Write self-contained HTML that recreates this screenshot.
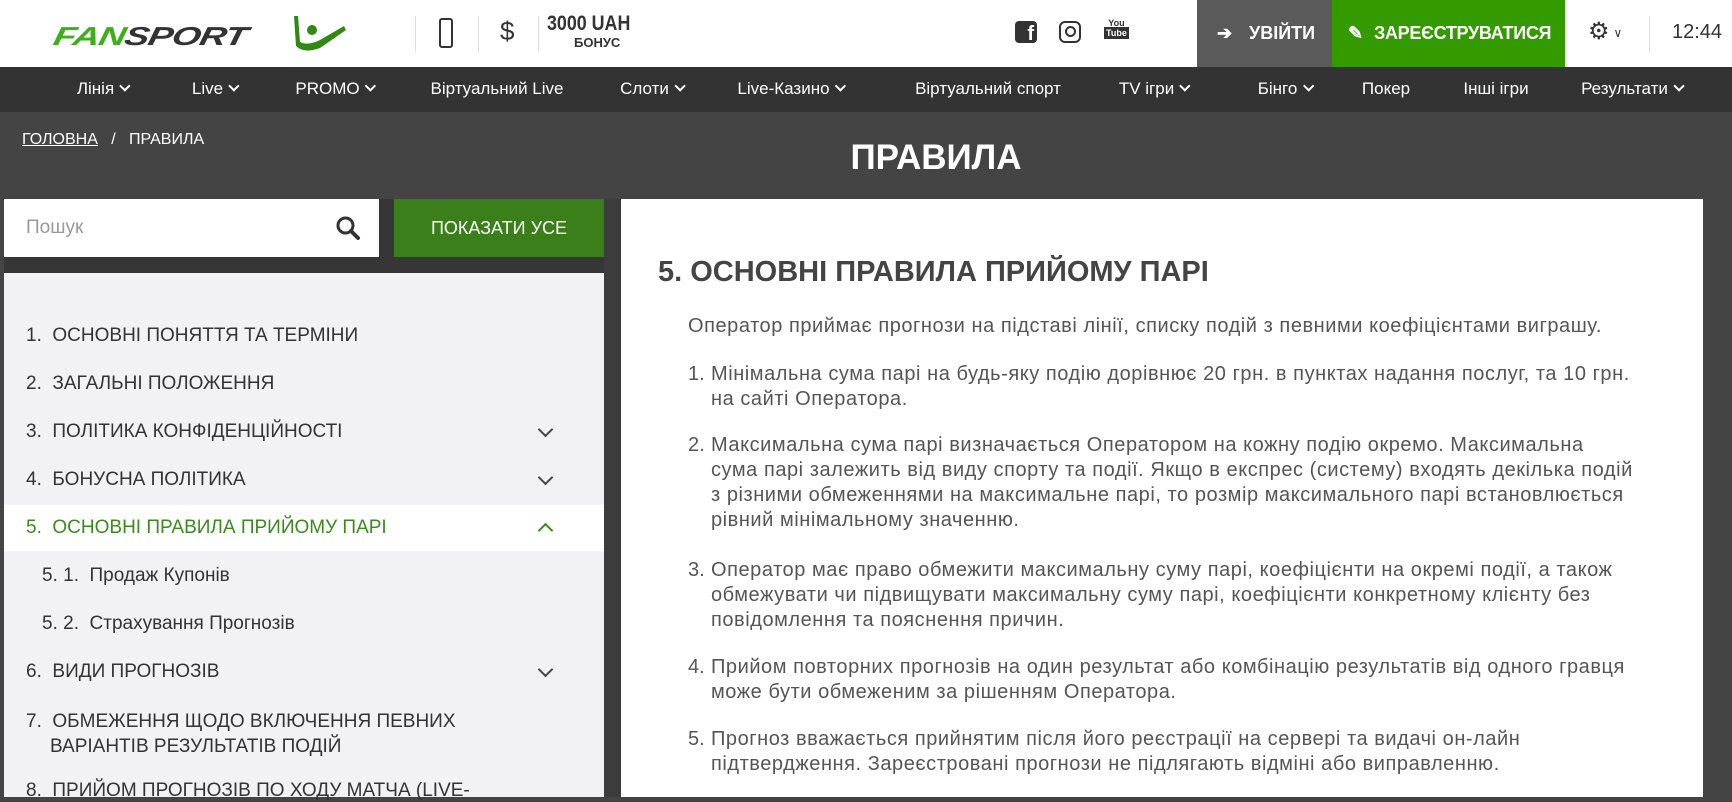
<!DOCTYPE html>
<html><head><meta charset="utf-8">
<style>
*{margin:0;padding:0;box-sizing:border-box}
body{width:1732px;height:797px;overflow:hidden;background:#444;font-family:"Liberation Sans",sans-serif;position:relative}
.abs{position:absolute}
.hdr{left:0;top:0;width:1732px;height:67px;background:#fff}
.nav{left:0;top:67px;width:1732px;height:45px;background:#333}
.nav span{position:absolute;top:12px;color:#fff;font-size:17px;transform:translateX(-50%);white-space:nowrap}
.chev{display:inline-block;width:8px;height:8px;border-right:2px solid currentColor;border-bottom:2px solid currentColor;transform:rotate(45deg);margin-left:7px;position:relative;top:-4px}
.sep{width:1px;height:36px;background:#ddd;top:16px}
.side{left:4px;top:273px;width:600px;height:524px;background:#f2f2f5}
.item{position:absolute;left:26px;font-size:19px;color:#333;white-space:nowrap}
.ic{position:absolute;left:540px;width:11px;height:11px;border-right:2px solid #444;border-bottom:2px solid #444;transform:rotate(45deg)}
.content{left:621px;top:199px;width:1082px;height:598px;background:#fff}
.p{position:absolute;font-size:20px;letter-spacing:0.55px;color:#555;line-height:25px;white-space:nowrap}
.n{position:absolute;left:688px;font-size:20px;line-height:25px;color:#555}
</style></head><body>
<div class="abs hdr"></div>
<!-- logo -->
<div class="abs" style="left:57px;top:22px;font-size:37px;font-weight:bold;font-style:italic;letter-spacing:-1px;transform:skewX(-12deg) scaleY(0.7);transform-origin:left top;white-space:nowrap"><span style="color:#3fae1c">FAN</span><span style="color:#333">SPORT</span></div>
<svg class="abs" style="left:290px;top:12px" width="60" height="42" viewBox="0 0 60 42"><path d="M4 4 L8 4 L10 30 Q18 34 30 28 L54 14 L56 18 L30 36 Q14 42 6 34 Z" fill="#2f8a12"/><circle cx="22" cy="18" r="5" fill="#2f8a12"/></svg>
<div class="abs sep" style="left:415px"></div>
<div class="abs sep" style="left:478px"></div>
<div class="abs sep" style="left:538px"></div>
<div class="abs" style="left:439px;top:18px;width:14px;height:30px;border:2.5px solid #333;border-radius:3px"></div>
<div class="abs" style="left:500px;top:16px;font-size:26px;color:#333">$</div>
<div class="abs" style="left:547px;top:12px;font-size:21px;font-weight:bold;color:#333;transform:scaleX(0.85);transform-origin:left">3000 UAH</div>
<div class="abs" style="left:574px;top:35px;font-size:13px;font-weight:bold;color:#333">БОНУС</div>
<!-- social -->
<div class="abs" style="left:1015px;top:21px;width:22px;height:22px;background:#333;border-radius:4px;color:#fff;font-weight:bold;font-size:20px;text-align:right;padding-right:3px;line-height:26px">f</div>
<div class="abs" style="left:1059px;top:21px;width:22px;height:22px;border:2.5px solid #333;border-radius:6px"><div style="margin:3px auto;width:11px;height:11px;border:2.5px solid #333;border-radius:50%"></div></div>
<div class="abs" style="left:1104px;top:18px;font-size:9px;font-weight:bold;color:#333;text-align:center;line-height:10px">You<br><span style="background:#333;color:#fff;padding:1px 2px">Tube</span></div>
<!-- buttons -->
<div class="abs" style="left:1197px;top:0;width:135px;height:67px;background:#5a5a5a;color:#fff;font-weight:bold;font-size:18px;line-height:67px;padding-left:52px"><span style="position:absolute;left:20px;font-size:18px">➔</span>УВІЙТИ</div>
<div class="abs" style="left:1332px;top:0;width:233px;height:67px;background:#339a00;color:#fff;font-weight:bold;font-size:18px;line-height:67px;padding-left:42px;letter-spacing:-0.3px"><span style="position:absolute;left:16px">✎</span>ЗАРЕЄСТРУВАТИСЯ</div>
<div class="abs" style="left:1588px;top:17px;font-size:24px;color:#333">⚙<span style="font-size:12px;margin-left:4px;vertical-align:middle">∨</span></div>
<div class="abs sep" style="left:1649px"></div>
<div class="abs" style="left:1672px;top:21px;font-size:20px;color:#333">12:44</div>
<!-- nav -->
<div class="abs nav">
<span style="left:103px">Лінія<i class="chev"></i></span>
<span style="left:215px">Live<i class="chev"></i></span>
<span style="left:335px">PROMO<i class="chev"></i></span>
<span style="left:497px">Віртуальний Live</span>
<span style="left:652px">Слоти<i class="chev"></i></span>
<span style="left:791px">Live-Казино<i class="chev"></i></span>
<span style="left:988px">Віртуальний спорт</span>
<span style="left:1154px">TV ігри<i class="chev"></i></span>
<span style="left:1285px">Бінго<i class="chev"></i></span>
<span style="left:1386px">Покер</span>
<span style="left:1496px">Інші ігри</span>
<span style="left:1632px">Результати<i class="chev"></i></span>
</div>
<!-- breadcrumb/title -->
<div class="abs" style="left:22px;top:131px;font-size:16px;color:#fff"><u>ГОЛОВНА</u>&nbsp;&nbsp; / &nbsp;&nbsp;ПРАВИЛА</div>
<div class="abs" style="left:0;width:1872px;top:138px;text-align:center;font-size:35px;font-weight:bold;color:#fff">ПРАВИЛА</div>
<!-- search -->
<div class="abs" style="left:4px;top:199px;width:600px;height:74px;background:#363636"></div>
<div class="abs" style="left:4px;top:199px;width:375px;height:58px;background:#fff"></div>
<div class="abs" style="left:26px;top:217px;font-size:19px;color:#999">Пошук</div>
<svg class="abs" style="left:335px;top:215px" width="26" height="26" viewBox="0 0 26 26"><circle cx="10.5" cy="10.5" r="7.5" fill="none" stroke="#333" stroke-width="3"/><path d="M16 16 L23 23" stroke="#333" stroke-width="4" stroke-linecap="round"/></svg>
<div class="abs" style="left:394px;top:199px;width:210px;height:58px;background:#3a7f1a;color:#fff;font-size:18px;text-align:center;line-height:58px">ПОКАЗАТИ УСЕ</div>
<div class="abs" style="left:604px;top:199px;width:17px;height:598px;background:#3c3c3c"></div>
<!-- sidebar -->
<div class="abs side"></div>
<div class="abs" style="left:4px;top:505px;width:600px;height:46px;background:#fff"></div>
<div class="item" style="top:325px">1.&nbsp; ОСНОВНІ ПОНЯТТЯ ТА ТЕРМІНИ</div>
<div class="item" style="top:373px">2.&nbsp; ЗАГАЛЬНІ ПОЛОЖЕННЯ</div>
<div class="item" style="top:421px">3.&nbsp; ПОЛІТИКА КОНФІДЕНЦІЙНОСТІ</div><div class="ic" style="top:424px"></div>
<div class="item" style="top:469px">4.&nbsp; БОНУСНА ПОЛІТИКА</div><div class="ic" style="top:472px"></div>
<div class="item" style="top:517px;color:#3a8a1e">5.&nbsp; ОСНОВНІ ПРАВИЛА ПРИЙОМУ ПАРІ</div><div class="ic" style="top:525px;border-color:#3a8a1e;transform:rotate(225deg)"></div>
<div class="item" style="top:565px;left:42px">5. 1.&nbsp; Продаж Купонів</div>
<div class="item" style="top:613px;left:42px">5. 2.&nbsp; Страхування Прогнозів</div>
<div class="item" style="top:661px">6.&nbsp; ВИДИ ПРОГНОЗІВ</div><div class="ic" style="top:664px"></div>
<div class="item" style="top:709px;line-height:25px">7.&nbsp; ОБМЕЖЕННЯ ЩОДО ВКЛЮЧЕННЯ ПЕВНИХ<br><span style="padding-left:24px">ВАРІАНТІВ РЕЗУЛЬТАТІВ ПОДІЙ</span></div>
<div class="item" style="top:780px">8.&nbsp; ПРИЙОМ ПРОГНОЗІВ ПО ХОДУ МАТЧА (LIVE-</div>
<!-- content -->
<div class="abs content"></div>
<div class="abs" style="left:658px;top:256px;font-size:29px;font-weight:bold;color:#444">5. ОСНОВНІ ПРАВИЛА ПРИЙОМУ ПАРІ</div>
<div class="p" style="left:688px;top:314px">Оператор приймає прогнози на підставі лінії, списку подій з певними коефіцієнтами виграшу.</div>
<div class="n" style="top:362px">1.</div>
<div class="p" style="left:711px;top:362px">Мінімальна сума парі на будь-яку подію дорівнює 20 грн. в пунктах надання послуг, та 10 грн.<br>на сайті Оператора.</div>
<div class="n" style="top:433px">2.</div>
<div class="p" style="left:711px;top:433px">Максимальна сума парі визначається Оператором на кожну подію окремо. Максимальна<br>сума парі залежить від виду спорту та події. Якщо в експрес (систему) входять декілька подій<br>з різними обмеженнями на максимальне парі, то розмір максимального парі встановлюється<br>рівний мінімальному значенню.</div>
<div class="n" style="top:558px">3.</div>
<div class="p" style="left:711px;top:558px">Оператор має право обмежити максимальну суму парі, коефіцієнти на окремі події, а також<br>обмежувати чи підвищувати максимальну суму парі, коефіцієнти конкретному клієнту без<br>повідомлення та пояснення причин.</div>
<div class="n" style="top:655px">4.</div>
<div class="p" style="left:711px;top:655px">Прийом повторних прогнозів на один результат або комбінацію результатів від одного гравця<br>може бути обмеженим за рішенням Оператора.</div>
<div class="n" style="top:727px">5.</div>
<div class="p" style="left:711px;top:727px">Прогноз вважається прийнятим після його реєстрації на сервері та видачі он-лайн<br>підтвердження. Зареєстровані прогнози не підлягають відміні або виправленню.</div>
</body></html>
